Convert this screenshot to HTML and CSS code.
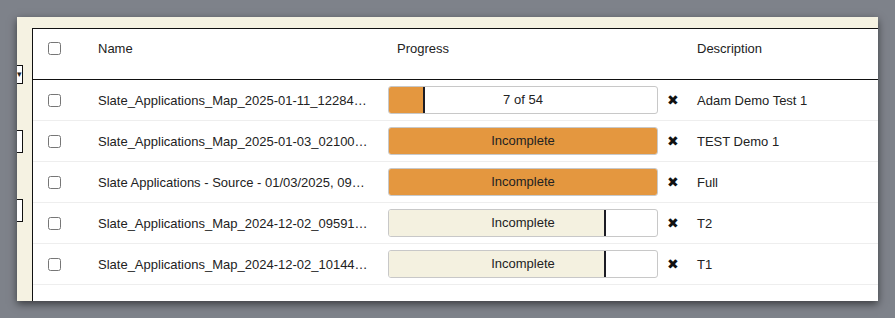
FILE: index.html
```html
<!DOCTYPE html>
<html lang="en">
<head>
    <meta charset="UTF-8">
    <title>Uploads</title>
    <link rel="stylesheet" href="styles.css">
</head>
<body>

<div class="panel">
    <!-- filter controls, mostly scrolled out of view -->
    <div class="filters">
        <div class="filter filter-select"><span class="caret">&#9662;</span></div>
        <div class="filter filter-text"></div>
        <div class="filter filter-text"></div>
    </div>

    <div class="table">
        <div class="row head">
            <div class="cell check"><input type="checkbox"></div>
            <div class="cell name">Name</div>
            <div class="cell progress-head">Progress</div>
            <div class="cell remove"></div>
            <div class="cell desc">Description</div>
        </div>

        <div class="row">
            <div class="cell check"><input type="checkbox"></div>
            <div class="cell name"><span class="clip">Slate_Applications_Map_2025-01-11_122845_upload</span></div>
            <div class="cell progress">
                <div class="bar"><span class="fill partial" style="width: 13.5%"></span><span class="label">7 of 54</span></div>
            </div>
            <div class="cell remove">&#10006;</div>
            <div class="cell desc">Adam Demo Test 1</div>
        </div>

        <div class="row">
            <div class="cell check"><input type="checkbox"></div>
            <div class="cell name"><span class="clip">Slate_Applications_Map_2025-01-03_021003_upload</span></div>
            <div class="cell progress">
                <div class="bar"><span class="fill" style="width: 100%"></span><span class="label">Incomplete</span></div>
            </div>
            <div class="cell remove">&#10006;</div>
            <div class="cell desc">TEST Demo 1</div>
        </div>

        <div class="row">
            <div class="cell check"><input type="checkbox"></div>
            <div class="cell name"><span class="clip">Slate Applications - Source - 01/03/2025, 09:10 PM</span></div>
            <div class="cell progress">
                <div class="bar"><span class="fill" style="width: 100%"></span><span class="label">Incomplete</span></div>
            </div>
            <div class="cell remove">&#10006;</div>
            <div class="cell desc">Full</div>
        </div>

        <div class="row">
            <div class="cell check"><input type="checkbox"></div>
            <div class="cell name"><span class="clip">Slate_Applications_Map_2024-12-02_095912_upload</span></div>
            <div class="cell progress">
                <div class="bar"><span class="fill pale partial" style="width: 80.8%"></span><span class="label">Incomplete</span></div>
            </div>
            <div class="cell remove">&#10006;</div>
            <div class="cell desc">T2</div>
        </div>

        <div class="row">
            <div class="cell check"><input type="checkbox"></div>
            <div class="cell name"><span class="clip">Slate_Applications_Map_2024-12-02_101445_upload</span></div>
            <div class="cell progress">
                <div class="bar"><span class="fill pale partial" style="width: 80.8%"></span><span class="label">Incomplete</span></div>
            </div>
            <div class="cell remove">&#10006;</div>
            <div class="cell desc">T1</div>
        </div>
    </div>
</div>

</body>
</html>
```

FILE: styles.css
```css
body {
    margin: 0;
    padding: 17px 0 0 17px;
    background-color: #7e828a;
    font-family: "Liberation Sans", Arial, sans-serif;
    font-size: 13px;
    color: #222;
    height: 318px;
    box-sizing: border-box;
    overflow: hidden;
}
.panel {
    width: 861px;
    height: 284px;
    background-color: #f5f2e2;
    display: flex;
    padding-top: 11px;
    box-sizing: border-box;
    overflow: hidden;
    box-shadow: 0 3px 8px rgba(0, 0, 0, 0.55);
}
.filters {
    width: 15px;
    flex-shrink: 0;
    overflow: hidden;
}
.filter {
    margin-left: -58px;
    width: 64px;
    background-color: #fff;
    border: 1px solid #111;
    box-sizing: border-box;
}
.filter-select {
    margin-top: 37px;
    height: 19px;
    font-size: 9px;
    line-height: 17px;
    padding-left: 57px;
}
.filter-text {
    height: 23px;
    margin-top: 46px;
}
.table {
    flex: 1;
    background-color: #fff;
    border-left: 1px solid #111;
    border-top: 1px solid #111;
}
.row {
    display: grid;
    grid-template-columns: 65px 290px 279px 30px 1fr;
    align-items: center;
    height: 41px;
    border-bottom: 1px solid #eee;
    box-sizing: border-box;
}
.row.head {
    height: 51px;
    border-bottom: 1px solid #111;
    padding-bottom: 12px;
}
.cell {
    white-space: nowrap;
}
.check {
    padding-left: 15px;
    display: flex;
}
.check input {
    margin: 0;
    width: 13px;
    height: 13px;
}
.name {
    padding-right: 20px;
    overflow: hidden;
}
.clip {
    display: block;
    overflow: hidden;
    text-overflow: ellipsis;
}
.progress-head {
    padding-left: 9px;
}
.bar {
    position: relative;
    width: 270px;
    height: 28px;
    border: 1px solid #c8c8c8;
    border-radius: 3px;
    box-sizing: border-box;
    overflow: hidden;
    background-color: #fff;
}
.fill {
    position: absolute;
    left: 0;
    top: 0;
    bottom: 0;
    background-color: #e4973f;
    box-sizing: border-box;
}
.fill.partial {
    border-right: 2px solid #1c1c24;
}
.fill.pale {
    background-color: #f4f1e0;
}
.label {
    position: relative;
    display: block;
    text-align: center;
    line-height: 26px;
}
.remove {
    font-size: 14px;
    color: #111;
}
```
